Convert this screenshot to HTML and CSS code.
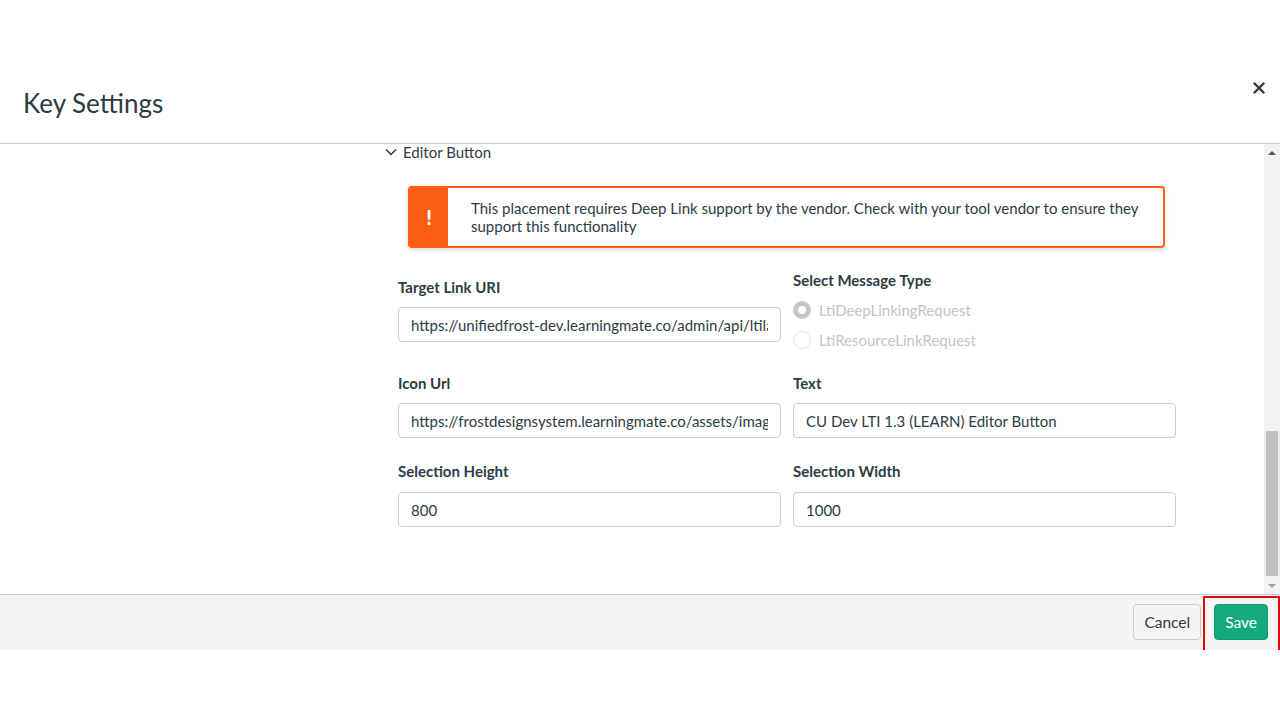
FILE: index.html
```html
<!DOCTYPE html>
<html>
<head>
    <title>Key Settings</title>
    <link rel="stylesheet" href="styles.css">
</head>
<body>
    <div class="modal">
        <div class="modal-header">
            <h1>Key Settings</h1>
            <button class="close-btn" title="Close">
                <svg width="12" height="12" viewBox="0 0 12 12"><path d="M1.5 1.5 L10.5 10.5 M10.5 1.5 L1.5 10.5" stroke="#2d3b45" stroke-width="2.4" stroke-linecap="round"/></svg>
            </button>
        </div>
        <div class="modal-body">
            <div class="content">
                <div class="toggle">
                    <svg width="12" height="8" viewBox="0 0 12 8"><path d="M1 1.5 L6 6.5 L11 1.5" fill="none" stroke="#2d3b45" stroke-width="1.5"/></svg>
                    <span>Editor Button</span>
                </div>
                <div class="placement">
                    <div class="alert">
                        <div class="alert-icon">!</div>
                        <div class="alert-text">This placement requires Deep Link support by the vendor. Check with your tool vendor to ensure they support this functionality</div>
                    </div>
                    <div class="row">
                        <div class="field field-offset">
                            <label>Target Link URI</label>
                            <input type="text" value="https://unifiedfrost-dev.learningmate.co/admin/api/ltilaunch">
                        </div>
                        <div class="field">
                            <label>Select Message Type</label>
                            <div class="radio checked"><span class="dot"></span>LtiDeepLinkingRequest</div>
                            <div class="radio"><span class="dot"></span>LtiResourceLinkRequest</div>
                        </div>
                    </div>
                    <div class="row">
                        <div class="field">
                            <label>Icon Url</label>
                            <input type="text" value="https://frostdesignsystem.learningmate.co/assets/images/icon.png">
                        </div>
                        <div class="field">
                            <label>Text</label>
                            <input type="text" value="CU Dev LTI 1.3 (LEARN) Editor Button">
                        </div>
                    </div>
                    <div class="row row-last">
                        <div class="field">
                            <label>Selection Height</label>
                            <input type="text" value="800">
                        </div>
                        <div class="field">
                            <label>Selection Width</label>
                            <input type="text" value="1000">
                        </div>
                    </div>
                </div>
            </div>
            <div class="scrollbar">
                <div class="arrow up"></div>
                <div class="track"><div class="thumb"></div></div>
                <div class="arrow down"></div>
            </div>
        </div>
        <div class="modal-footer">
            <button class="btn">Cancel</button>
            <button class="btn btn-save">Save</button>
            <div class="highlight"></div>
        </div>
    </div>
</body>
</html>
```

FILE: styles.css
```css
body {
    margin: 0;
    font-family: Lato, "Open Sans", sans-serif;
    color: #2d3b45;
    background: #fff;
}
.modal {
    width: 1280px;
}
.modal-header {
    height: 144px;
    box-sizing: border-box;
    display: flex;
    justify-content: space-between;
    align-items: flex-start;
    padding: 86px 15px 0 23px;
    border-bottom: 1px solid #c7cdd1;
}
.modal-header h1 {
    margin: 0;
    font-size: 26px;
    font-weight: 400;
    line-height: 34px;
}
.close-btn {
    margin-top: -4px;
    border: none;
    background: none;
    padding: 0;
    width: 12px;
    height: 12px;
    cursor: pointer;
}
.close-btn svg {
    display: block;
}
.modal-body {
    height: 450px;
    display: flex;
}
.content {
    flex: 1;
    padding-left: 385px;
}
.toggle {
    padding-top: 1px;
    height: 14px;
    line-height: 14px;
    display: flex;
    align-items: center;
    gap: 6px;
    font-size: 15px;
}
.placement {
    padding-left: 13px;
    width: 778px;
}
.alert {
    margin: 27px 0 0 10px;
    width: 757px;
    height: 62px;
    box-sizing: border-box;
    display: flex;
    border: 2px solid #fc5e13;
    border-radius: 4px;
    box-shadow: 0 2px 4px rgba(0,0,0,0.15);
    overflow: hidden;
}
.alert-icon {
    flex-shrink: 0;
    width: 38px;
    background: #fc5e13;
    color: #fff;
    font-weight: 900;
    font-size: 20px;
    display: flex;
    align-items: center;
    justify-content: center;
}
.alert-text {
    padding: 11px 20px 0 23px;
    font-size: 15px;
    line-height: 18px;
}
.row {
    display: flex;
    gap: 12px;
    margin-top: 22px;
}
.row-last {
    margin-top: 23px;
}
.field {
    flex: 1;
    display: flex;
    flex-direction: column;
}
.field-offset {
    padding-top: 7px;
}
.field label {
    font-size: 15px;
    font-weight: 700;
    line-height: 20px;
    margin-bottom: 10px;
}
.row-last .field label {
    margin-bottom: 11px;
}
.field input {
    height: 35px;
    box-sizing: border-box;
    border: 1px solid #c7cdd1;
    border-radius: 4px;
    padding: 0 12px;
    font-family: Lato, sans-serif;
    font-size: 15px;
    color: #2d3b45;
    background: #fff;
}
.radio {
    display: flex;
    align-items: center;
    gap: 8px;
    height: 30px;
    font-size: 15px;
    color: #c0c5c9;
}
.radio.checked {
    margin-top: -5px;
}
.radio:last-child {
    margin-bottom: -4px;
}
.dot {
    width: 18px;
    height: 18px;
    box-sizing: border-box;
    border-radius: 50%;
    border: 1px solid #e6e8ea;
}
.radio.checked .dot {
    border: 5px solid #c3c7cb;
}
.scrollbar {
    width: 16px;
    background: #f1f1f1;
    display: flex;
    flex-direction: column;
}
.arrow {
    height: 17px;
    display: flex;
    align-items: center;
    justify-content: center;
}
.arrow.up::before {
    content: "";
    border-left: 4px solid transparent;
    border-right: 4px solid transparent;
    border-bottom: 4px solid #505050;
}
.arrow.down::before {
    content: "";
    border-left: 4px solid transparent;
    border-right: 4px solid transparent;
    border-top: 4px solid #a3a3a3;
}
.track {
    flex: 1;
    display: flex;
    flex-direction: column;
    justify-content: flex-end;
    padding-bottom: 1px;
}
.thumb {
    height: 145px;
    margin: 0 2px;
    background: #c1c1c1;
}
.modal-footer {
    position: relative;
    height: 56px;
    box-sizing: border-box;
    border-top: 1px solid #c7cdd1;
    background: #f5f5f5;
    display: flex;
    justify-content: flex-end;
    align-items: center;
    gap: 13px;
    padding: 0 12px 2px 0;
}
.btn {
    height: 36px;
    padding: 0 10px;
    border: 1px solid #c7cdd1;
    border-radius: 4px;
    background: #f5f5f5;
    color: #2d3b45;
    font-family: Lato, sans-serif;
    font-size: 15.5px;
    cursor: pointer;
}
.btn-save {
    background: #14ab7c;
    border-color: #0f9a6f;
    color: #fff;
}
.highlight {
    position: absolute;
    left: 1203px;
    top: 1px;
    width: 77px;
    height: 56px;
    box-sizing: border-box;
    border: 2px solid #e3080e;
}
```
